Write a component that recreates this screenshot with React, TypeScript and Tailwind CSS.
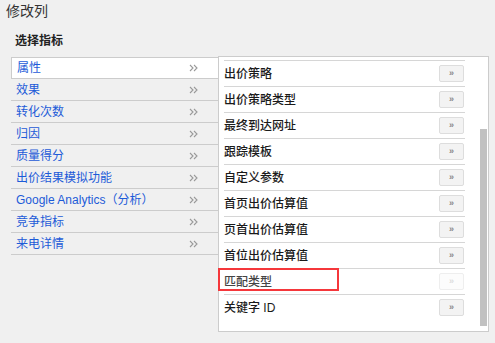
import React from "react";

const leftItems = [
  "属性",
  "效果",
  "转化次数",
  "归因",
  "质量得分",
  "出价结果模拟功能",
  "Google Analytics（分析）",
  "竞争指标",
  "来电详情",
];

const rightItems = [
  "出价策略",
  "出价策略类型",
  "最终到达网址",
  "跟踪模板",
  "自定义参数",
  "首页出价估算值",
  "页首出价估算值",
  "首位出价估算值",
  "匹配类型",
  "关键字 ID",
];

function Chevrons() {
  return (
    <svg width="9" height="8" viewBox="0 0 9 8" fill="none" stroke="#9a9a9a" strokeWidth="1.1">
      <path d="M1 1l3 3-3 3" />
      <path d="M5 1l3 3-3 3" />
    </svg>
  );
}

export default function App() {
  return (
    <div
      className="w-[495px] h-[343px] bg-[#f0f0f0] overflow-hidden"
      style={{ fontFamily: '"Liberation Sans", "Noto Sans CJK SC", sans-serif' }}
    >
      <div className="pl-[6px] pt-[1px] h-[24px] text-[14px] leading-[20px] text-[#333]">修改列</div>
      <div className="pl-[15px] pt-[9px] h-[32px] text-[12px] leading-[16px] font-bold text-[#222]">选择指标</div>

      <div className="flex pl-[11px]">
        {/* 左侧分类 */}
        <div className="w-[207px] pt-[1px]">
          {leftItems.map((item, i) => (
            <div
              key={item}
              className={
                "flex items-center justify-between h-[22px] pl-[5px] pr-[20px] border-b border-[#cccccc] text-[12px] text-[#1d5bd8] " +
                (i === 0 ? "bg-white border-l border-t" : "")
              }
            >
              <span>{item}</span>
              <Chevrons />
            </div>
          ))}
        </div>

        {/* 右侧字段 */}
        <div className="relative w-[271px] h-[276px] bg-white border border-[#cccccc] pl-[5px] pt-[3px]">
          {rightItems.map((item) => {
            const disabled = item === "匹配类型";
            return (
              <div
                key={item}
                className="flex items-center justify-between w-[241px] h-[26px] border-t border-[#d6d6d6]"
              >
                <span className={"text-[12px] font-medium " + (disabled ? "text-[#444]" : "text-[#1a1a1a]")}>
                  {item}
                </span>
                <span
                  className={
                    "flex items-center justify-center w-[25px] h-[17px] rounded-[2px] border text-[9px] font-bold leading-none mr-px " +
                    (disabled
                      ? "border-[#eeeeee] bg-[#fcfcfc] text-[#dddddd]"
                      : "border-[#dddddd] bg-[#f3f3f3] text-[#888888]")
                  }
                >
                  »
                </span>
              </div>
            );
          })}
          <div className="absolute right-[1px] top-[72px] w-[7px] h-[197px] bg-[#c1c1c1]" />
          <div className="absolute left-[-1px] top-[211px] w-[121px] h-[23px] border-2 border-[#f5373b]" />
        </div>
      </div>
    </div>
  );
}
